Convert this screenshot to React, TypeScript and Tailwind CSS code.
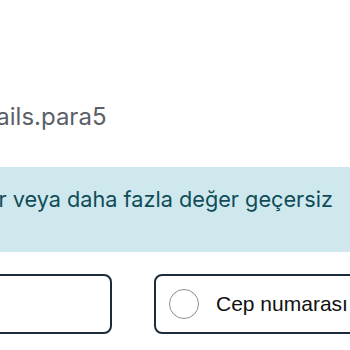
const App = () => {
    return (
        <div className="w-[350px] h-[350px] overflow-hidden bg-white">
            <div className="pt-[101px] -ml-[43px]">
                <p className="text-[24px] leading-[32px] text-[#5b6067] font-['Inter',sans-serif] whitespace-nowrap">
                    Details.para5
                </p>
            </div>
            <div className="mt-[34px] h-[85px] bg-[#cfe8ee] pt-[18px] -mr-[40px]">
                <p className="-ml-[21px] text-[21.7px] leading-[28px] text-[#0f4c58] font-['Inter',sans-serif] whitespace-nowrap">
                    Bir veya daha fazla değer geçersiz
                </p>
            </div>
            <div className="mt-[22px] flex gap-[42px] -ml-[88px]">
                <div className="w-[200px] h-[60px] shrink-0 rounded-lg border-2 border-[#1e2b3a] bg-white" />
                <label className="w-[240px] h-[60px] shrink-0 rounded-lg border-2 border-[#1e2b3a] bg-white flex items-center pl-[13px] gap-[17px]">
                    <span className="w-[30px] h-[30px] rounded-full border border-[#8d8d8d] bg-white shrink-0" />
                    <span className="text-[21px] text-[#111] font-['Liberation_Sans',Arial,sans-serif] whitespace-nowrap">
                        Cep numarası
                    </span>
                </label>
            </div>
        </div>
    );
};

export default App;
